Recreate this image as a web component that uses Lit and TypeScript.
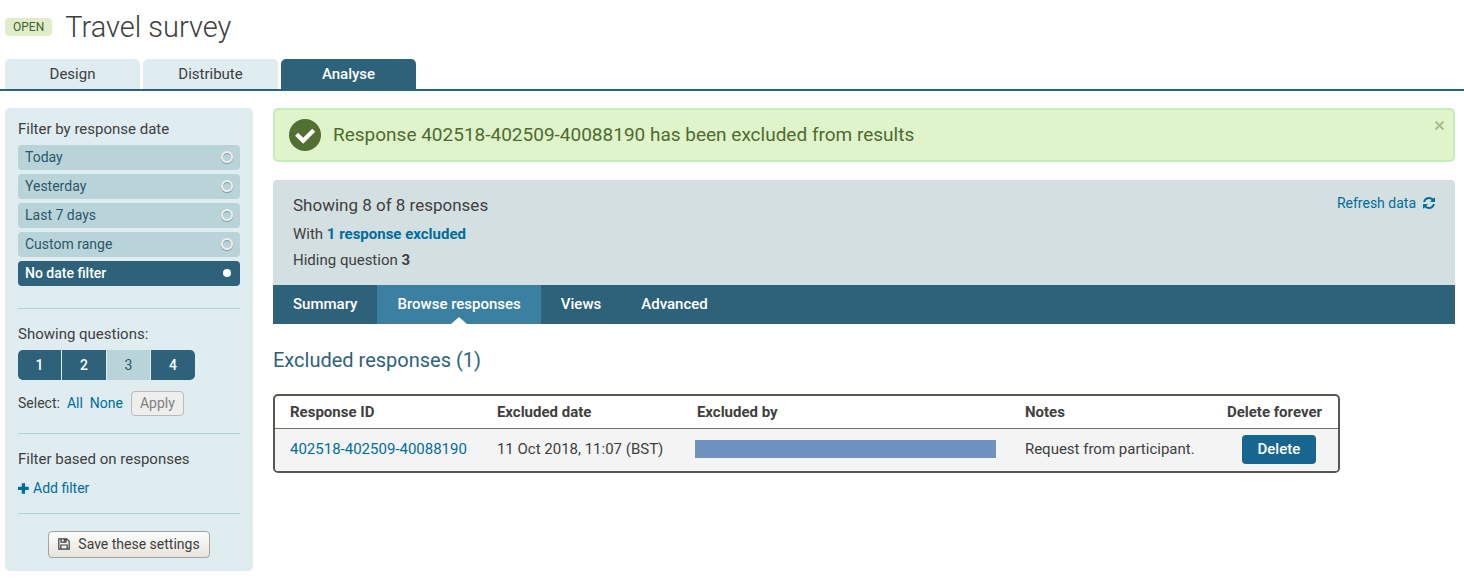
import { LitElement, html, css } from "lit";
import { customElement, state } from "lit/decorators.js";

@customElement("survey-header")
class SurveyHeader extends LitElement {
  static styles = css`
    :host { display: block; }
    .title-row { display: flex; align-items: center; gap: 13px; padding: 8px 5px 0; }
    .status {
      padding: 0 8px; border-radius: 4px; background: #dfedcb; color: #44632b;
      font-size: 12px; line-height: 18px;
    }
    h1 { margin: 0; font-size: 29px; font-weight: 300; line-height: 38px; color: #404040; }
    .tabs { display: flex; gap: 3px; padding: 13px 5px 0; border-bottom: 2px solid #2e627a; }
    .tab {
      width: 135px; border-radius: 5px 5px 0 0; background: #dfecf0; color: #404040;
      line-height: 30px; text-align: center; text-decoration: none;
    }
    .tab.active { background: #2e627a; color: #fff; font-weight: 500; }
  `;
  render() {
    return html`
      <div class="title-row"><span class="status">OPEN</span><h1>Travel survey</h1></div>
      <nav class="tabs">
        <a class="tab" href="#design">Design</a>
        <a class="tab" href="#distribute">Distribute</a>
        <a class="tab active" href="#analyse" aria-current="page">Analyse</a>
      </nav>`;
  }
}

@customElement("filter-panel")
class FilterPanel extends LitElement {
  static styles = css`
    :host { display: block; padding: 11px 13px 13px; border-radius: 5px; background: #dfecf0; box-sizing: border-box; }
    fieldset { margin: 0; padding: 0; border: 0; min-width: 0; }
    legend, h2 { display: block; margin: 0; padding: 0; font-size: 15px; font-weight: 400; line-height: 20px; }
    .dates { display: grid; gap: 4px; padding-top: 6px; }
    .date {
      display: flex; align-items: center; justify-content: space-between;
      height: 24px; padding: 0 7px 1px; border-radius: 4px; background: #b9d4d9; color: #2c566b;
      font-size: 14px;
    }
    .date.on { background: #2e627a; color: #fff; font-weight: 500; }
    .date input {
      appearance: none; width: 12px; height: 12px; margin: 0; border: 2px solid #eee; border-radius: 50%;
      box-sizing: border-box; box-shadow: 0 1px 1px #7c9499, inset 0 1px 1px #7c9499;
    }
    .date input:checked { width: 8px; height: 8px; margin-right: 2px; background: #fff; border: 0; box-shadow: none; }
    hr { height: 1px; margin: 0; border: 0; background: #b0d5d6; }
    .block { padding: 15px 0 17px; }
    .block.filters { padding-bottom: 15px; }
    .spaced { margin-top: 22px; }
    .questions { display: flex; gap: 1px; padding: 6px 0 11px; }
    .question {
      position: relative; display: grid; place-items: center; width: 44px; height: 30px;
      box-sizing: border-box; padding-bottom: 1px; background: #2e627a; color: #fff; font-size: 14px; font-weight: 500;
    }
    .question:first-child { width: 43px; border-radius: 5px 0 0 5px; }
    .question:last-child { border-radius: 0 5px 5px 0; }
    .question.off { width: 43px; background: #b9d4d9; color: #2c566b; font-weight: 400; }
    .question input { position: absolute; opacity: 0; margin: 0; }
    .select { display: flex; align-items: baseline; gap: 7px; font-size: 14px; }
    a { color: #006d9c; text-decoration: none; }
    button { font: inherit; cursor: pointer; }
    .apply {
      height: 25px; margin-left: 1px; padding: 0 8px 1px; border: 1px solid #bbb; border-radius: 4px;
      background: #eee; color: #808080;
    }
    .add { display: flex; align-items: center; gap: 4px; padding-top: 9px; font-size: 14px; line-height: 20px; }
    .save-row { display: flex; justify-content: center; padding: 17px 0 0; }
    .save {
      display: flex; align-items: center; gap: 8px; height: 27px; padding: 0 9px 1px;
      border: 1px solid #a3a3a3; border-radius: 4px; color: #404040; font-size: 14px;
      background: linear-gradient(#fdfdfc, #e6e4da);
    }
  `;
  @state() private date = "No date filter";
  @state() private hiddenQuestions = new Set([3]);

  private toggle(n: number) {
    const next = new Set(this.hiddenQuestions);
    next.has(n) ? next.delete(n) : next.add(n);
    this.hiddenQuestions = next;
  }

  render() {
    const dates = ["Today", "Yesterday", "Last 7 days", "Custom range", "No date filter"];
    return html`
      <fieldset>
        <legend>Filter by response date</legend>
        <div class="dates">
          ${dates.map((d) => html`
            <label class="date ${d === this.date ? "on" : ""}">${d}
              <input type="radio" name="date" .checked=${d === this.date} @change=${() => (this.date = d)}>
            </label>`)}
        </div>
      </fieldset>
      <hr class="spaced">
      <div class="block">
        <fieldset>
          <legend>Showing questions:</legend>
          <div class="questions">
            ${[1, 2, 3, 4].map((n) => html`
              <label class="question ${this.hiddenQuestions.has(n) ? "off" : ""}">
                <input type="checkbox" .checked=${!this.hiddenQuestions.has(n)} @change=${() => this.toggle(n)}>${n}
              </label>`)}
          </div>
        </fieldset>
        <div class="select">
          <span>Select:</span><a href="#all">All</a><a href="#none">None</a>
          <button class="apply" type="button">Apply</button>
        </div>
      </div>
      <hr>
      <div class="block filters">
        <h2>Filter based on responses</h2>
        <a class="add" href="#add">
          <svg width="11" height="11" viewBox="0 0 10 10" aria-hidden="true"><path fill="currentColor" d="M3.400.2h3v3.200h2.900q.5 0 .5.5v2q0 .5-.5.5H6.400v3.300H3.400V6.400H.5Q0 6.400 0 5.900V3.900q0-.5.5-.5h2.900z"/></svg>Add filter</a>
      </div>
      <hr>
      <div class="save-row">
        <button class="save" type="button">
          <svg width="12" height="12" viewBox="0 0 12 12" fill="none" stroke="currentColor" stroke-width="1.2" aria-hidden="true"><path d="M.8.8h7.900l2.500 2.500v7.900H.8zM3 .8v3.400h5V.8M2.800 11.200V7h6.400v4.200"/><path stroke-width="1.6" d="M6.600 1v2.600"/></svg>
          Save these settings</button>
      </div>`;
  }
}

@customElement("response-browser")
class ResponseBrowser extends LitElement {
  static styles = css`
    :host { display: block; min-width: 0; }
    a { color: #006d9c; text-decoration: none; }
    .alert {
      display: flex; align-items: center; gap: 12px; padding: 9px 8px 9px 14px; margin-bottom: 18px;
      border: 2px solid #c3edb9; border-radius: 5px; background: #dff4ca; color: #4f6b31;
      font-size: 19px;
    }
    .message { flex: 1; line-height: 24px; }
    .close {
      display: grid; align-self: flex-start; padding: 2px 1px; border: 0; background: none;
      color: #a7bd8f; cursor: pointer;
    }
    .info {
      display: flex; justify-content: space-between; align-items: flex-start;
      padding: 11px 20px 12px; border-radius: 4px 4px 0 0; background: #d3dfe1;
    }
    .info p { margin: 0; font-size: 15px; line-height: 26px; }
    .info .count { margin-bottom: 2px; font-size: 17px; line-height: 28px; }
    .info b { font-weight: 700; }
    .refresh { display: flex; align-items: center; gap: 7px; font-size: 14px; line-height: 24px; }
    .subnav { display: flex; background: #2e627a; }
    .item { position: relative; padding: 0 20px; color: #fff; font-size: 15px; font-weight: 500; line-height: 39px; }
    .item.active { background: #3b80a0; }
    .item.active::after {
      content: ""; position: absolute; left: 50%; bottom: 0; margin-left: -8px;
      border: 8px solid transparent; border-top: 0; border-bottom: 7px solid #fff;
    }
    h2 { margin: 24px 0 21px; font-size: 20px; font-weight: 400; line-height: 25px; color: #2e627a; }
    .frame { display: inline-block; max-width: 100%; box-sizing: border-box; overflow: hidden; border: 2px solid #595550; border-radius: 5px; }
    table { border-collapse: collapse; }
    th, td { padding: 0 15px; text-align: left; white-space: nowrap; font-size: 15px; }
    th { height: 32px; font-weight: 700; border-bottom: 1px solid #70756c; }
    .date-col { min-width: 170px; }
    .notes-col { min-width: 172px; }
    .delete-col { min-width: 96px; }
    td { height: 40px; padding-bottom: 2px; background: #f4f4f4; }
    .delete-cell { padding-left: 23px; }
    .redacted { width: 301px; height: 18px; margin: 0 -1px 0 -2px; background: #7092bf; }
    .delete {
      display: block; margin: 0 auto; height: 29px; padding: 0 16px; border: 0; border-radius: 4px;
      background: #17668f; color: #fff; font: inherit; font-weight: 500; cursor: pointer;
    }
  `;
  render() {
    return html`
      <div class="alert" role="status">
        <svg width="32" height="32" viewBox="0 0 32 32" aria-hidden="true"><circle cx="16" cy="16" r="16" fill="#527032"/><path d="M7.600 15.300l6.600 6.500L24.700 11.300" fill="none" stroke="#fff" stroke-width="4.200"/></svg>
        <span class="message">Response 402518-402509-40088190 has been excluded from results</span>
        <button class="close" type="button" aria-label="Close"><svg width="9" height="9" viewBox="0 0 9 9"><path d="M.5.5l8 8M8.500.5l-8 8" stroke="currentColor" stroke-width="2"/></svg></button>
      </div>
      <section class="info">
        <div>
          <p class="count">Showing 8 of 8 responses</p>
          <p>With <a href="#excluded"><b>1 response excluded</b></a></p>
          <p>Hiding question <b>3</b></p>
        </div>
        <a class="refresh" href="#refresh">Refresh data
          <svg width="12" height="12" viewBox="0 0 1536 1536" aria-hidden="true"><path fill="currentColor" d="M1511 928q0 5-1 7-64 268-268 434.500T764 1536q-146 0-282.500-55T238 1324l-129 129q-19 19-45 19t-45-19-19-45V960q0-26 19-45t45-19h448q26 0 45 19t19 45-19 45l-137 137q71 66 161 102t187 36q134 0 250-65t186-179q11-17 53-117 8-23 30-23h192q13 0 22.500 9.500t9.500 22.500zm25-800v448q0 26-19 45t-45 19h-448q-26 0-45-19t-19-45 19-45l138-138Q969 256 768 256q-134 0-250 65T332 500q-11 17-53 117-8 23-30 23H50q-13 0-22.500-9.500T18 608v-7q65-268 270-434.500T768 0q146 0 284 55.500T1297 212l130-129q19-19 45-19t45 19 19 45z"/></svg></a>
      </section>
      <nav class="subnav">
        <a class="item" href="#summary">Summary</a>
        <a class="item active" href="#browse" aria-current="page">Browse responses</a>
        <a class="item" href="#views">Views</a>
        <a class="item" href="#advanced">Advanced</a>
      </nav>
      <h2>Excluded responses (1)</h2>
      <div class="frame">
        <table>
          <thead><tr>
            <th>Response ID</th><th class="date-col">Excluded date</th><th>Excluded by</th>
            <th class="notes-col">Notes</th><th class="delete-col">Delete forever</th>
          </tr></thead>
          <tbody><tr>
            <td><a href="#response">402518-402509-40088190</a></td>
            <td>11 Oct 2018, 11:07 (BST)</td>
            <td><div class="redacted"></div></td>
            <td>Request from participant.</td>
            <td class="delete-cell"><button class="delete" type="button">Delete</button></td>
          </tr></tbody>
        </table>
      </div>`;
  }
}

@customElement("app-root")
class AppRoot extends LitElement {
  static styles = css`
    :host { display: block; background: #fff; color: #404040; font: 15px/20px Roboto, sans-serif; }
    .page { display: grid; grid-template-columns: 248px minmax(0, 1fr); align-items: start; gap: 20px; padding: 17px 9px 9px 5px; }
  `;
  render() {
    return html`
      <survey-header></survey-header>
      <main class="page">
        <filter-panel></filter-panel>
        <response-browser></response-browser>
      </main>`;
  }
}
